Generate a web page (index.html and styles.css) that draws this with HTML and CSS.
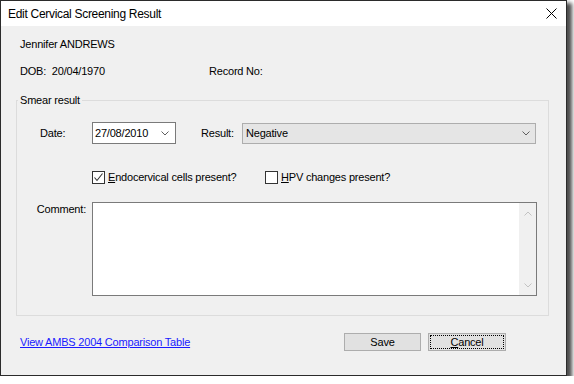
FILE: index.html
```html
<!DOCTYPE html>
<html lang="en">
<head>
    <meta charset="UTF-8">
    <title>Edit Cervical Screening Result</title>
    <link rel="stylesheet" href="styles.css">
</head>
<body>
    <div class="window">
        <!-- title bar -->
        <div class="titlebar">
            <span class="title">Edit Cervical Screening Result</span>
            <span class="close">
                <svg width="11" height="11" viewBox="0 0 11 11"><path d="M0.5 0.5L10.5 10.5M10.5 0.5L0.5 10.5" stroke="#000" stroke-width="1" fill="none"/></svg>
            </span>
        </div>

        <div class="content">
            <div class="patient">Jennifer ANDREWS</div>
            <div class="info-row">
                <span class="dob">DOB:&nbsp;&nbsp;20/04/1970</span>
                <span class="record">Record No:</span>
            </div>

            <fieldset class="group">
                <legend>Smear result</legend>

                <div class="date-row">
                    <span class="lbl-date">Date:</span>
                    <div class="datepicker">
                        <span>27/08/2010</span>
                        <svg class="chev" width="8" height="5" viewBox="0 0 8 5"><path d="M0.5 0.5L4 4L7.5 0.5" stroke="#5f5f5f" fill="none"/></svg>
                    </div>
                    <span class="lbl-result">Result:</span>
                    <div class="combo">
                        <span>Negative</span>
                        <svg class="chev" width="8" height="5" viewBox="0 0 8 5"><path d="M0.5 0.5L4 4L7.5 0.5" stroke="#5f5f5f" fill="none"/></svg>
                    </div>
                </div>

                <div class="check-row">
                    <label class="check check-first">
                        <span class="box">
                            <svg width="11" height="11" viewBox="0 0 11 11"><path d="M1.5 5.5L4 8.5L9.5 1.5" stroke="#333" stroke-width="1.1" fill="none"/></svg>
                        </span>
                        <span><u>E</u>ndocervical cells present?</span>
                    </label>
                    <label class="check">
                        <span class="box"></span>
                        <span><u>H</u>PV changes present?</span>
                    </label>
                </div>

                <div class="comment-row">
                    <span class="lbl-comment">Comment:</span>
                    <div class="memo">
                        <div class="memo-text"></div>
                        <div class="vscroll">
                            <svg width="8" height="5" viewBox="0 0 8 5"><path d="M0.5 4.5L4 1L7.5 4.5" stroke="#c2c2c2" fill="none"/></svg>
                            <svg width="8" height="5" viewBox="0 0 8 5"><path d="M0.5 0.5L4 4L7.5 0.5" stroke="#c2c2c2" fill="none"/></svg>
                        </div>
                    </div>
                </div>
            </fieldset>

            <div class="footer">
                <a href="#" class="link">View AMBS 2004 Comparison Table</a>
                <div class="buttons">
                    <button class="btn">Save</button>
                    <button class="btn btn-cancel"><u>C</u>ancel</button>
                </div>
            </div>
        </div>
    </div>
</body>
</html>
```

FILE: styles.css
```css
body {
    margin: 0;
    background-color: #fff;
    font-family: "Liberation Sans", Arial, sans-serif;
    font-size: 11px;
    letter-spacing: -0.2px;
    color: #000;
}
.window {
    width: 567px;
    height: 376px;
    box-sizing: border-box;
    border: 1px solid #2b2b2b;
    background-color: #f0f0f0;
    box-shadow: 4px 4px 4px 1px rgba(0, 0, 0, 0.7);
    display: flex;
    flex-direction: column;
}
.titlebar {
    height: 25px;
    background-color: #fff;
    display: flex;
    align-items: center;
    justify-content: space-between;
    padding-left: 7px;
}
.title {
    font-family: "Liberation Sans", Arial, sans-serif;
    font-size: 12px;
    letter-spacing: -0.3px;
}
.close {
    width: 30px;
    height: 25px;
    display: flex;
    align-items: center;
    justify-content: center;
}
.content {
    padding-top: 12px;
}
.patient {
    margin-left: 19px;
    line-height: 13px;
}
.info-row {
    display: flex;
    margin: 14px 0 0 19px;
    line-height: 13px;
}
.dob {
    width: 189px;
}

/* group box */
.group {
    margin: 16px 17px 0 15px;
    padding: 15px 0 19px 0;
    border: 1px solid #dcdcdc;
    min-width: 0;
}
.group legend {
    padding: 0 2px;
    margin-left: 1px;
    line-height: 13px;
}
.date-row {
    display: flex;
    align-items: center;
    height: 22px;
    padding-left: 23px;
}
.lbl-date {
    width: 52px;
}
.datepicker {
    width: 84px;
    height: 22px;
    box-sizing: border-box;
    border: 1px solid #7a7a7a;
    background-color: #fff;
    display: flex;
    align-items: center;
    justify-content: space-between;
    padding: 0 6px 0 2px;
}
.lbl-result {
    margin-left: 25px;
    width: 41px;
}
.combo {
    width: 294px;
    height: 21px;
    box-sizing: border-box;
    border: 1px solid #adadad;
    background-color: #e5e5e5;
    display: flex;
    align-items: center;
    justify-content: space-between;
    padding: 0 5px 0 3px;
}
.chev {
    display: block;
}
.check-row {
    display: flex;
    align-items: center;
    height: 13px;
    margin-top: 27px;
    padding-left: 75px;
}
.check {
    display: flex;
    align-items: center;
    line-height: 13px;
}
.check-first {
    width: 173px;
}
.box {
    width: 13px;
    height: 13px;
    box-sizing: border-box;
    border: 1px solid #333;
    background-color: #fff;
    margin-right: 3px;
    display: flex;
    align-items: center;
    justify-content: center;
}
.comment-row {
    display: flex;
    align-items: flex-start;
    margin-top: 18px;
}
.lbl-comment {
    width: 75px;
    box-sizing: border-box;
    text-align: right;
    padding-right: 6px;
    line-height: 13px;
    margin-top: 1px;
}
.memo {
    width: 445px;
    height: 94px;
    box-sizing: border-box;
    border: 1px solid #7a7a7a;
    background-color: #fff;
    display: flex;
}
.memo-text {
    flex: 1;
}
.vscroll {
    width: 17px;
    background-color: #f0f0f0;
    display: flex;
    flex-direction: column;
    align-items: center;
    justify-content: space-between;
    padding: 8px 0 7px;
    box-sizing: border-box;
}

/* bottom row */
.footer {
    display: flex;
    align-items: center;
    justify-content: space-between;
    height: 18px;
    margin-top: 17px;
    padding: 0 60px 0 19px;
}
.link {
    color: #1a1aff;
    text-decoration: underline;
}
.buttons {
    display: flex;
    gap: 7px;
}
.btn {
    width: 77px;
    height: 18px;
    padding: 0;
    border: 1px solid #adadad;
    background-color: #e1e1e1;
    font-family: inherit;
    font-size: 11px;
    letter-spacing: -0.2px;
    color: #000;
}
.btn-cancel {
    width: 78px;
    outline: 1px dotted #000;
    outline-offset: -3px;
}
```
